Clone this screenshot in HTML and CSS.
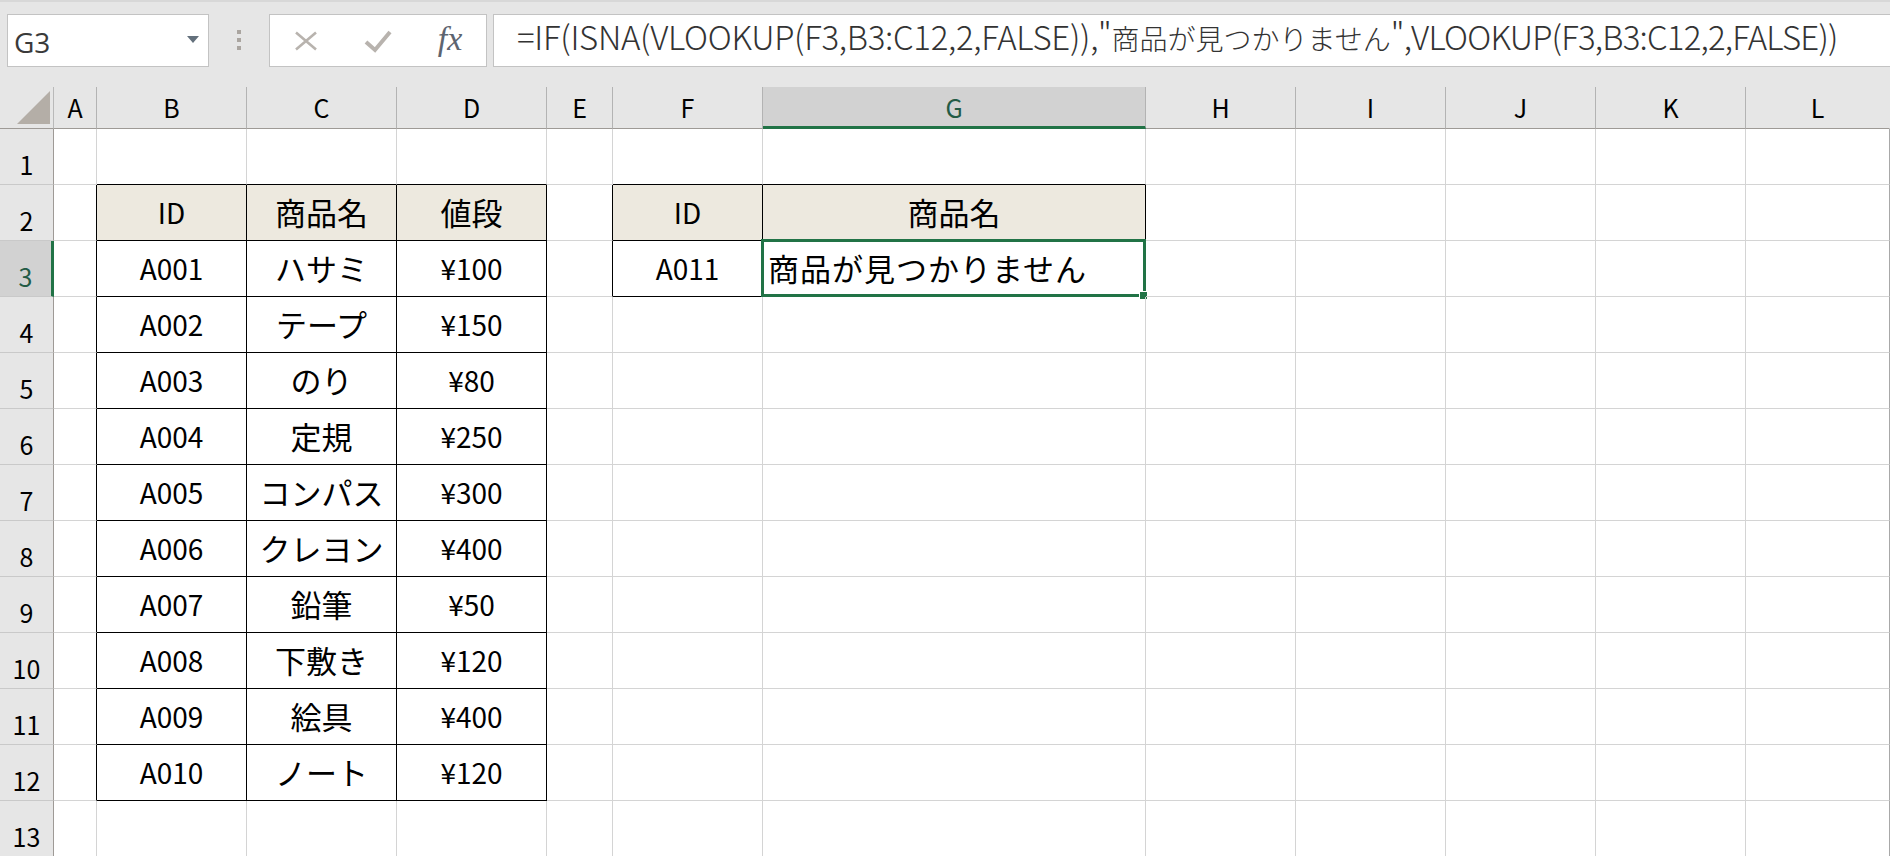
FILE: index.html
```html
<!DOCTYPE html>
<html lang="ja">
<head>
  <meta charset="UTF-8">
  <meta name="viewport" content="width=device-width, initial-scale=1.0">
  <title>商品検索 - Excel</title>
  <link rel="stylesheet" href="styles.css">
</head>
<body>
  <!-- Name box + formula bar -->
  <div class="formula-bar">
    <div class="name-box">
      <span class="cell-ref">G3</span>
      <span class="name-arrow"></span>
    </div>
    <div class="grip"><span></span><span></span><span></span></div>
    <div class="bar-buttons">
      <span class="bar-btn">
        <svg width="24" height="22" viewBox="0 0 24 22"><path d="M2 2.5 L22 19.5 M22 2.5 L2 19.5" stroke="#b8b3ae" stroke-width="2.6" fill="none"/></svg>
      </span>
      <span class="bar-btn">
        <svg width="28" height="24" viewBox="0 0 28 24"><path d="M2 13 L11 21 L26 3" stroke="#b8b3ae" stroke-width="4" fill="none"/></svg>
      </span>
      <span class="bar-btn"><span class="fx">fx</span></span>
    </div>
    <div class="formula-input">
      <span class="latin">=IF(ISNA(VLOOKUP(F3,B3:C12,2,FALSE)),"</span><span class="jp">商品が見つかりません</span><span class="latin tail">",VLOOKUP(F3,B3:C12,2,FALSE))</span>
    </div>
  </div>

  <!-- Worksheet grid, filled by the script below -->
  <div class="sheet" id="sheet"></div>

  <script>
    const letters = "ABCDEFGHIJKL".split("");
    const rowCount = 13;
    const active = { col: 6, row: 3 }; // G3

    const products = [
      ["A001", "ハサミ", "¥100"],
      ["A002", "テープ", "¥150"],
      ["A003", "のり", "¥80"],
      ["A004", "定規", "¥250"],
      ["A005", "コンパス", "¥300"],
      ["A006", "クレヨン", "¥400"],
      ["A007", "鉛筆", "¥50"],
      ["A008", "下敷き", "¥120"],
      ["A009", "絵具", "¥400"],
      ["A010", "ノート", "¥120"]
    ];

    const values = {
      B2: "ID", C2: "商品名", D2: "値段",
      F2: "ID", G2: "商品名",
      F3: "A011", G3: "商品が見つかりません"
    };
    products.forEach((p, i) => {
      values["B" + (i + 3)] = p[0];
      values["C" + (i + 3)] = p[1];
      values["D" + (i + 3)] = p[2];
    });

    // ranges with thin black borders; first row gets the header fill
    const tables = [
      { c1: 1, r1: 2, c2: 3, r2: 12 },  // B2:D12
      { c1: 5, r1: 2, c2: 6, r2: 3 }    // F2:G3
    ];

    function tableAt(c, r) {
      return tables.find(t => c >= t.c1 && c <= t.c2 && r >= t.r1 && r <= t.r2);
    }

    const sheet = document.getElementById("sheet");
    let html = '<div class="corner"><svg width="53" height="41" viewBox="0 0 53 41"><path d="M17 37 L50 37 L50 4 Z" fill="#b4aea7"/></svg></div>';

    letters.forEach((l, c) => {
      let cls = "col-head";
      if (c === active.col) cls += " sel";
      if (c === letters.length - 1) cls += " last";
      html += `<div class="${cls}">${l}</div>`;
    });

    for (let r = 1; r <= rowCount; r++) {
      html += `<div class="row-head${r === active.row ? " sel" : ""}">${r}</div>`;
      letters.forEach((l, c) => {
        const t = tableAt(c, r);
        const text = values[l + r] || "";
        let cls = "cell";
        if (t || tableAt(c + 1, r)) cls += " edge-r";
        if (t || tableAt(c, r + 1)) cls += " edge-b";
        if (t && r === t.r1) cls += " fill";
        if (/[\u3040-\u9fff]/.test(text)) cls += " jp";
        if (c === letters.length - 1) cls += " last";
        const isActive = c === active.col && r === active.row;
        if (isActive) cls += " active";
        html += `<div class="${cls}">${text}${isActive ? '<span class="cursor"><span class="handle"></span></span>' : ""}</div>`;
      });
    }
    sheet.innerHTML = html;
  </script>
</body>
</html>
```

FILE: styles.css
```css
/* Reset */
* {
  box-sizing: border-box;
  margin: 0;
  padding: 0;
}
body {
  width: 1890px;
  height: 856px;
  overflow: hidden;
  background: #fff;
  font-family: "Noto Sans CJK JP", sans-serif;
}

/* Formula bar strip */
.formula-bar {
  height: 87px;
  background: #e6e6e6;
  border-top: 2px solid #d8d8d8;
  display: flex;
  align-items: flex-start;
  padding: 12px 0 0 7px;
}
.name-box {
  width: 202px;
  height: 53px;
  background: #fff;
  border: 1px solid #c3c3c3;
  display: flex;
  align-items: flex-start;
  justify-content: space-between;
  padding: 7px 9px 0 6px;
}
.cell-ref {
  font-family: "Open Sans", sans-serif;
  font-size: 28px;
  line-height: 40px;
  color: #3a3a3a;
}
.name-arrow {
  margin-top: 14px;
  border-left: 6.5px solid transparent;
  border-right: 6.5px solid transparent;
  border-top: 7px solid #63707c;
}
.grip {
  width: 60px;
  display: flex;
  flex-direction: column;
  align-items: center;
  gap: 4px;
  padding-top: 16px;
}
.grip span {
  width: 4px;
  height: 4px;
  background: #aaa5a0;
}
.bar-buttons {
  width: 218px;
  height: 53px;
  background: #fff;
  border: 1px solid #c3c3c3;
  display: flex;
}
.bar-btn {
  width: 72px;
  display: flex;
  align-items: center;
  justify-content: center;
}
.fx {
  font-family: "Liberation Serif", serif;
  font-style: italic;
  font-size: 34px;
  line-height: 1;
  padding-bottom: 3px;
  color: #5d6470;
}
.formula-input {
  flex: 1;
  height: 53px;
  margin: 0 -4px 0 6px;
  background: #fff;
  border: 1px solid #c3c3c3;
  padding-left: 23px;
  font-size: 33px;
  font-weight: 300;
  line-height: 42px;
  color: #333;
  white-space: nowrap;
}
.formula-input .latin {
  letter-spacing: -0.3px;
}
.formula-input .tail {
  letter-spacing: -0.8px;
}
.formula-input .jp {
  font-size: 28px;
}

/* Worksheet */
.sheet {
  display: grid;
  grid-template-columns: 54px 43px repeat(3, 150px) 66px 150px 383px repeat(4, 150px) 144px;
  grid-template-rows: 42px repeat(13, 56px);
}
.corner, .col-head, .row-head {
  background: #e6e6e6;
  color: #000;
  font-size: 25px;
  line-height: 1;
  display: flex;
  align-items: flex-end;
  justify-content: center;
}
.corner {
  border-right: 1px solid #b9b9b9;
  border-bottom: 1px solid #9e9a96;
}
.corner svg {
  display: block;
  align-self: flex-start;
}
.col-head {
  border-right: 1px solid #b3b3b3;
  border-bottom: 1px solid #9e9a96;
  padding-bottom: 8px;
}
.col-head.last {
  border-right-color: #e6e6e6;
}
.row-head {
  border-right: 1px solid #9e9a96;
  border-bottom: 1px solid #c9c9c9;
  padding-bottom: 7px;
}
.col-head.sel, .row-head.sel {
  background: #d2d2d2;
  color: #235b45;
}
.col-head.sel {
  border-bottom: 3px solid #217346;
  padding-bottom: 6px;
}
.row-head.sel {
  border-right: 3px solid #217346;
}

/* Cells */
.cell {
  position: relative;
  border-right: 1px solid #d4d4d4;
  border-bottom: 1px solid #d4d4d4;
  display: flex;
  align-items: flex-end;
  justify-content: center;
  padding-bottom: 14px;
  font-size: 28px;
  line-height: 1;
  color: #000;
  white-space: nowrap;
}
.cell.jp {
  font-size: 31px;
  padding-bottom: 13px;
}
.cell.last {
  border-right-color: #a8a8a8;
}
.cell.edge-r {
  border-right-color: #000;
}
.cell.edge-b {
  border-bottom-color: #000;
}
.cell.fill {
  background: #ede9df;
}
.cell.active {
  justify-content: flex-start;
  padding-left: 5px;
  letter-spacing: 1px;
}

/* Selection outline and fill handle */
.cursor {
  position: absolute;
  left: -2px;
  top: -2px;
  right: -1px;
  bottom: -1px;
  border: 3px solid #217346;
}
.handle {
  position: absolute;
  right: -4px;
  bottom: -5px;
  width: 7px;
  height: 7px;
  background: #217346;
  box-shadow: 0 0 0 1px #fff;
}
```
